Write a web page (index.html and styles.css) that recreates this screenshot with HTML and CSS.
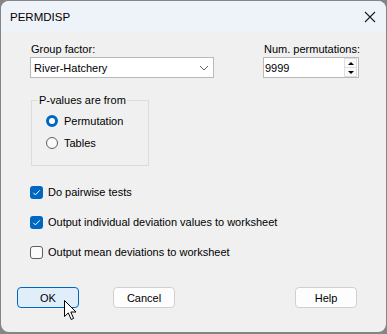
FILE: index.html
```html
<!DOCTYPE html>
<html>
<head>
<meta charset="utf-8">
<link rel="stylesheet" href="styles.css">
</head>
<body>
<div class="window">
  <div class="titlebar">
    <span class="title">PERMDISP</span>
    <svg class="close" width="12" height="12" viewBox="0 0 12 12"><path d="M1 1 L11 11 M11 1 L1 11" stroke="#1b1b1b" stroke-width="1.1" fill="none"/></svg>
  </div>
  <div class="content">
    <div class="top-row">
      <div class="field group-field">
        <div class="label">Group factor:</div>
        <div class="select">
          <span>River-Hatchery</span>
          <svg class="chev" width="10" height="6" viewBox="0 0 10 6"><path d="M1 1 L5 5 L9 1" stroke="#606060" stroke-width="1" fill="none"/></svg>
        </div>
      </div>
      <div class="field perm-field">
        <div class="label">Num. permutations:</div>
        <div class="spin">
          <span class="spin-val">9999</span>
          <div class="spin-btns">
            <div class="spin-btn"><span class="tri-up"></span></div>
            <div class="spin-btn"><span class="tri-down"></span></div>
          </div>
        </div>
      </div>
    </div>
    <div class="groupbox">
      <div class="legend">P-values are from</div>
      <div class="radio-row"><span class="radio checked"></span><span>Permutation</span></div>
      <div class="radio-row"><span class="radio"></span><span>Tables</span></div>
    </div>
    <div class="checks">
      <div class="check-row"><span class="checkbox checked"><svg width="13" height="13" viewBox="0 0 13 13"><path d="M3.3 6.8 L5.4 8.9 L9.8 4.3" stroke="#fff" stroke-width="1" fill="none"/></svg></span><span>Do pairwise tests</span></div>
      <div class="check-row"><span class="checkbox checked"><svg width="13" height="13" viewBox="0 0 13 13"><path d="M3.3 6.8 L5.4 8.9 L9.8 4.3" stroke="#fff" stroke-width="1" fill="none"/></svg></span><span>Output individual deviation values to worksheet</span></div>
      <div class="check-row"><span class="checkbox"></span><span>Output mean deviations to worksheet</span></div>
    </div>
    <div class="buttons">
      <div class="btn default">OK</div>
      <div class="btn cancel">Cancel</div>
      <div class="btn help">Help</div>
    </div>
  </div>
  <svg class="cursor" width="14" height="21" viewBox="0 0 14 21"><path d="M0.5 0.5 V16.5 L4.3 12.9 L7.2 19.5 L9.6 18.4 L6.8 12 H12 Z" fill="#fff" stroke="#000" stroke-width="1" stroke-linejoin="miter"/></svg>
</div>
</body>
</html>
```
FILE: styles.css
```css
html, body {
  margin: 0;
  padding: 0;
}
body {
  background: #858585;
  width: 387px;
  height: 334px;
  overflow: hidden;
  font-family: "Liberation Sans", Arial, sans-serif;
  font-size: 11px;
  color: #000;
  white-space: nowrap;
}
.window {
  position: relative;
  margin: 1px 1px 0 1px;
  width: 385px;
  height: 331px;
  border-radius: 8px;
  background: #f0f0f0;
  overflow: hidden;
}
.titlebar {
  height: 31px;
  background: #eef2f9;
  display: flex;
  align-items: center;
  padding-left: 9px;
  padding-right: 10px;
}
.title {
  flex: 1;
  line-height: 16px;
  margin-top: 1px;
  font-size: 11.5px;
}
.close {
  display: block;
  margin-top: 1px;
}
.content {
  padding-top: 9px;
}
.top-row {
  display: flex;
}
.label {
  line-height: 16px;
  padding-left: 1px;
}
.group-field {
  margin-left: 29px;
  width: 184px;
}
.perm-field {
  margin-left: auto;
  margin-right: 27px;
  width: 96px;
}
.select {
  height: 19px;
  border: 1px solid #b9b9b9;
  background: #fff;
  display: flex;
  align-items: center;
  padding-left: 3px;
  padding-right: 4px;
}
.select span {
  flex: 1;
}
.chev {
  display: block;
}
.spin {
  height: 19px;
  border: 1px solid #b9b9b9;
  background: #fff;
  display: flex;
  align-items: center;
  padding-left: 1px;
}
.spin-val {
  flex: 1;
}
.spin-btns {
  display: flex;
  flex-direction: column;
  width: 13px;
  height: 19px;
  margin-right: 1px;
}
.spin-btn {
  flex: 1;
  display: flex;
  align-items: center;
  justify-content: center;
  background: #fafafa;
  border: 1px solid #dedede;
}
.spin-btn + .spin-btn {
  border-top: none;
}
.tri-up {
  width: 0;
  height: 0;
  border-left: 3px solid transparent;
  border-right: 3px solid transparent;
  border-bottom: 3px solid #000;
}
.tri-down {
  width: 0;
  height: 0;
  border-left: 3px solid transparent;
  border-right: 3px solid transparent;
  border-top: 3px solid #000;
}
.groupbox {
  margin-top: 22px;
  margin-left: 30px;
  width: 116px;
  height: 64px;
  border: 1px solid #dcdcdc;
}
.legend {
  margin-top: -9px;
  margin-left: 6px;
  width: fit-content;
  padding: 0 1px;
  background: #f0f0f0;
  line-height: 16px;
}
.radio-row {
  height: 22px;
  display: flex;
  align-items: center;
  padding-left: 14px;
  gap: 6px;
}
.legend + .radio-row {
  margin-top: 2px;
}
.radio {
  box-sizing: border-box;
  width: 12px;
  height: 12px;
  border-radius: 50%;
  border: 1px solid #5d5d5d;
  background: #fbfbfb;
}
.radio.checked {
  border: 3.5px solid #0067c0;
  background: #fff;
}
.checks {
  margin-top: 11px;
}
.check-row {
  height: 30px;
  display: flex;
  align-items: center;
  padding-left: 29px;
  gap: 5px;
}
.checkbox {
  box-sizing: border-box;
  width: 13px;
  height: 13px;
  border-radius: 3px;
  border: 1px solid #5d5d5d;
  background: #fbfbfb;
  display: flex;
}
.checkbox.checked {
  border: none;
  background: #0067c0;
}
.checkbox svg {
  display: block;
}
.buttons {
  display: flex;
  margin-top: 20px;
  padding: 0 29px 0 16px;
}
.btn {
  box-sizing: border-box;
  width: 62px;
  height: 21px;
  border: 1px solid #d0d0d0;
  border-radius: 4px;
  background: #fdfdfd;
  display: flex;
  align-items: center;
  justify-content: center;
  line-height: 16px;
}
.btn.default {
  border-color: #0067c0;
  background: #e0eef9;
}
.btn.cancel {
  margin-left: 34px;
}
.btn.help {
  margin-left: auto;
}
.cursor {
  position: absolute;
  left: 63px;
  top: 299px;
}
```
